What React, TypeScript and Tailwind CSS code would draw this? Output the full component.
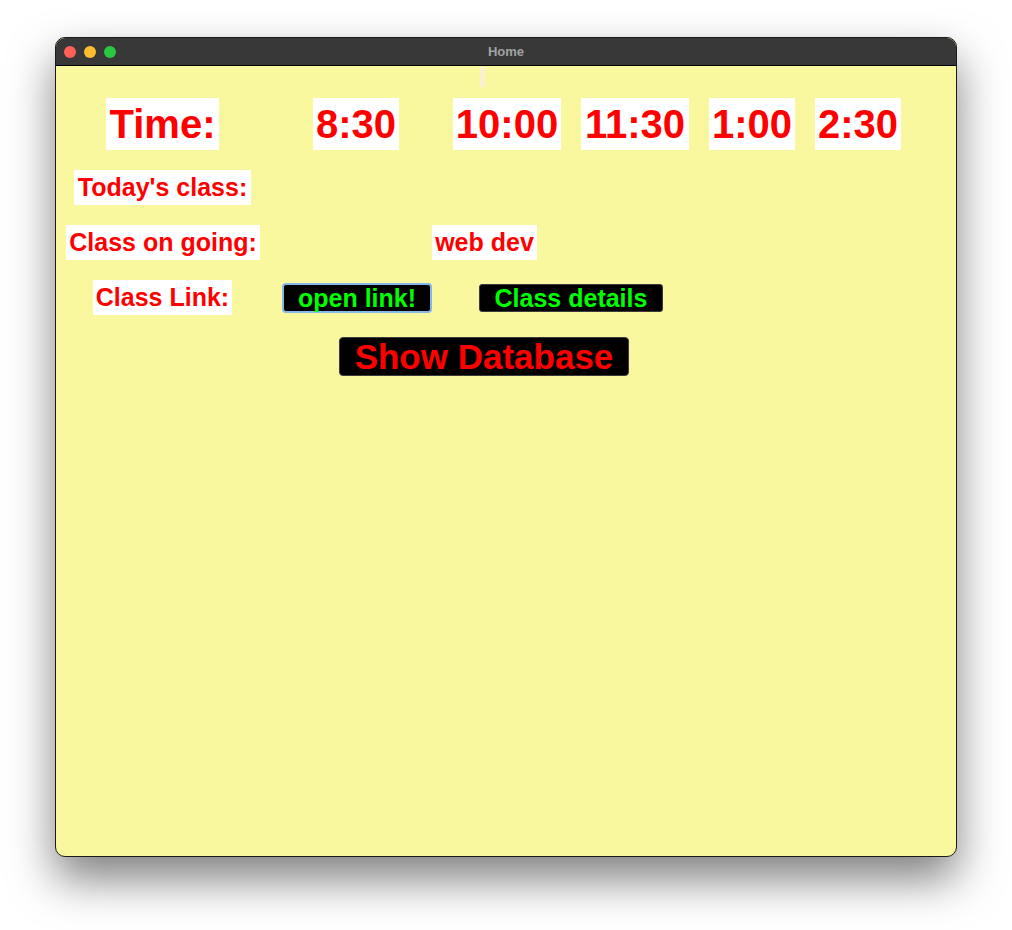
export default function App() {
  const font = { fontFamily: '"Liberation Sans", Arial, Helvetica, sans-serif' };

  return (
    <div className="min-h-screen bg-white pt-[37px] pl-[55px]" style={font}>
      {/* window */}
      <div className="w-[902px] h-[820px] rounded-[10px] border border-[#1a1a1a] overflow-hidden bg-[#f9f89e] shadow-[0_22px_45px_rgba(0,0,0,0.5)] flex flex-col">
        {/* title bar */}
        <div className="h-[28px] shrink-0 bg-[#383838] border-b border-black grid grid-cols-[1fr_auto_1fr] items-center">
          <div className="flex items-center gap-[8px] pl-[8px]">
            <span className="w-[12px] h-[12px] rounded-full bg-[#fe5f57]" />
            <span className="w-[12px] h-[12px] rounded-full bg-[#febc2e]" />
            <span className="w-[12px] h-[12px] rounded-full bg-[#28c840]" />
          </div>
          <div className="text-[13px] font-bold text-[#a2a2a2]">Home</div>
          <div />
        </div>

        {/* content */}
        <div className="flex-1 flex flex-col text-[#ff0000] font-bold">
          <div className="ml-[424px] mt-[1px] w-[5px] h-[20px] bg-[#fdf0d2]" />

          {/* time row */}
          <div className="flex items-start mt-[11px] text-[40px]">
            <div className="ml-[50px] w-[113px] h-[52px] bg-white flex items-center justify-center">Time:</div>
            <div className="ml-[94px] w-[86px] h-[52px] bg-white flex items-center justify-center">8:30</div>
            <div className="ml-[54px] w-[108px] h-[52px] bg-white flex items-center justify-center">10:00</div>
            <div className="ml-[20px] w-[108px] h-[52px] bg-white flex items-center justify-center">11:30</div>
            <div className="ml-[20px] w-[86px] h-[52px] bg-white flex items-center justify-center">1:00</div>
            <div className="ml-[20px] w-[86px] h-[52px] bg-white flex items-center justify-center">2:30</div>
          </div>

          <div className="flex mt-[20px] text-[25px]">
            <div className="ml-[18px] w-[177px] h-[35px] bg-white flex items-center justify-center">Today's class:</div>
          </div>

          <div className="flex mt-[20px] text-[25px]">
            <div className="ml-[10px] w-[194px] h-[35px] bg-white flex items-center justify-center">Class on going:</div>
            <div className="ml-[172px] w-[105px] h-[35px] bg-white flex items-center justify-center">web dev</div>
          </div>

          <div className="flex items-start mt-[20px] text-[25px]">
            <div className="ml-[37px] w-[139px] h-[35px] bg-white flex items-center justify-center">Class Link:</div>
            <button className="ml-[50px] mt-[3px] w-[150px] h-[30px] bg-black text-[#00ff00] border-2 border-[#86b6ea] rounded-[4px] flex items-center justify-center leading-none">
              open link!
            </button>
            <button className="ml-[47px] mt-[4px] w-[184px] h-[28px] bg-black text-[#00ff00] border border-[#3c3c3c] rounded-[3px] flex items-center justify-center leading-none">
              Class details
            </button>
          </div>

          <div className="flex mt-[22px]">
            <button className="ml-[283px] w-[290px] h-[39px] bg-black text-[#ff0000] text-[35px] border border-[#3c3c3c] rounded-[4px] flex items-center justify-center leading-none">
              Show Database
            </button>
          </div>
        </div>
      </div>
    </div>
  );
}
